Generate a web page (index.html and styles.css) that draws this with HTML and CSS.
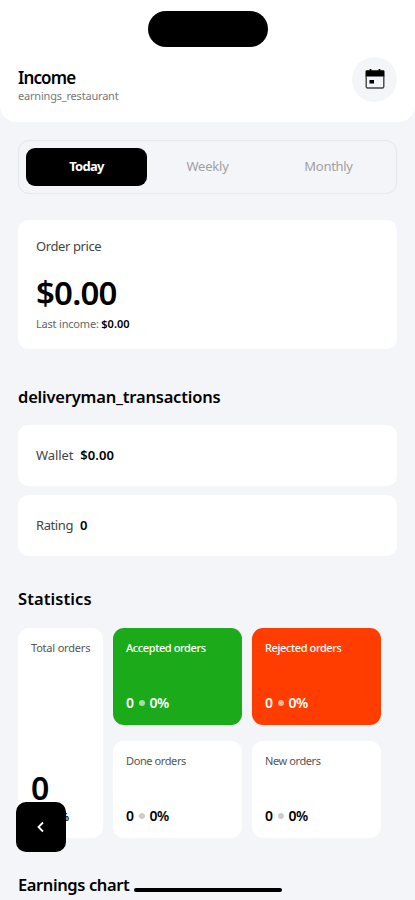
FILE: index.html
```html
<!DOCTYPE html>
<html lang="en">
<head>
<meta charset="utf-8">
<title>Income</title>
<link rel="stylesheet" href="styles.css">
</head>
<body>
<main class="screen">
  <header class="header">
    <div class="notch"></div>
    <div class="header-row">
      <div>
        <h1 class="title">Income</h1>
        <p class="subtitle">earnings_restaurant</p>
      </div>
      <button class="calendar" aria-label="Calendar">
        <svg width="20" height="20" viewBox="0 0 20 20"><path d="M0.500 7.500V2.500A1.200 1.200 0 0 1 1.700 1.300H18.300A1.200 1.200 0 0 1 19.500 2.500V7.500Z" fill="#000"/><path d="M5.500 0v2M14.500 0v2" stroke="#000" stroke-width="1.800"/><path d="M1.200 7V17.500Q1.200 19 2.700 19H17.300Q18.800 19 18.800 17.500V7" fill="none" stroke="#444" stroke-width="1.400"/><rect x="4.500" y="11" width="4.500" height="3.500" fill="#000"/></svg>
      </button>
    </div>
  </header>

  <nav class="tabs">
    <span class="tab active">Today</span>
    <span class="tab weekly">Weekly</span>
    <span class="tab monthly">Monthly</span>
  </nav>

  <section class="card price">
    <p class="label order">Order price</p>
    <p class="amount">$0.00</p>
    <p class="last">Last income: <b>$0.00</b></p>
  </section>

  <h2 class="heading transactions">deliveryman_transactions</h2>
  <section class="card row"><span class="label wallet">Wallet</span><b>$0.00</b></section>
  <section class="card row"><span class="label rating">Rating</span><b>0</b></section>

  <h2 class="heading statistics">Statistics</h2>
  <section class="stats">
    <div class="stat total">
      <p class="name total-name">Total orders</p>
      <p class="count">0</p>
      <p class="value"><span>0</span><i></i><span>0%</span></p>
    </div>
    <div class="stat green">
      <p class="name accepted">Accepted orders</p>
      <p class="value"><span>0</span><i></i><span>0%</span></p>
    </div>
    <div class="stat red">
      <p class="name rejected">Rejected orders</p>
      <p class="value"><span>0</span><i></i><span>0%</span></p>
    </div>
    <div class="stat">
      <p class="name done">Done orders</p>
      <p class="value"><span>0</span><i></i><span>0%</span></p>
    </div>
    <div class="stat">
      <p class="name new">New orders</p>
      <p class="value"><span>0</span><i></i><span>0%</span></p>
    </div>
  </section>

  <h2 class="heading chart">Earnings chart</h2>

  <button class="back" aria-label="Back">
    <svg width="10" height="12" viewBox="0 0 10 12"><path d="M7 1.500L2.500 6L7 10.500" fill="none" stroke="#fff" stroke-width="1.800"/></svg>
  </button>
  <div class="home-bar"></div>
</main>
</body>
</html>
```
FILE: styles.css
```css
* { box-sizing: border-box; margin: 0; padding: 0; }
body { background: #f4f5f9; font-family: "Noto Sans", sans-serif; color: #000; }
button { border: 0; display: flex; align-items: center; justify-content: center; }
.screen { position: relative; width: 415px; height: 900px; overflow: hidden; white-space: nowrap; }

.header { height: 122px; background: #fff; border-radius: 0 0 16px 16px; padding: 11px 18px 0; }
.notch { width: 120px; height: 36px; margin: 0 auto 10px 130px; border-radius: 18px; background: #000; }
.header-row { display: flex; justify-content: space-between; }
.title { margin-top: 11px; font-size: 17px; line-height: 20px; font-weight: 600; letter-spacing: -0.85px; }
.subtitle { font-size: 11px; line-height: 16px; color: #777; letter-spacing: -0.2px; }
.calendar { width: 45px; height: 45px; border-radius: 50%; background: #f4f5f8; }
.calendar svg { position: relative; top: -1px; }

.tabs { display: flex; height: 54px; margin: 18px 18px 0; padding: 7px; border: 1px solid #e6e7ea; border-radius: 11px; }
.tab { flex: 1; height: 38px; line-height: 37px; text-align: center; font-size: 13px; color: #a0a0a3; }
.active { background: #000; color: #fff; font-weight: 700; border-radius: 9px; letter-spacing: -0.7px; }
.weekly { letter-spacing: -0.2px; }
.monthly { letter-spacing: -0.3px; }

.card { margin: 0 18px; background: #fff; border-radius: 10px; padding: 0 18px; }
.price { height: 129px; margin-top: 26px; padding-top: 16px; }
.label { font-size: 13px; line-height: 20px; color: #444; letter-spacing: -0.4px; }
.amount { margin-top: 16px; font-size: 33px; line-height: 42px; font-weight: 600; letter-spacing: -0.8px; }
.last { margin-top: 2px; font-size: 11px; line-height: 16px; color: #666; letter-spacing: -0.2px; }
.last b { color: #000; font-weight: 600; letter-spacing: 0; }

.heading { margin-left: 18px; font-size: 16.5px; line-height: 24px; font-weight: 600; letter-spacing: -0.2px; }
.transactions { margin-top: 36px; margin-bottom: 16px; }
.row { display: flex; align-items: center; gap: 7px; height: 61px; margin-bottom: 9px; padding-bottom: 2px; }
.label.wallet { letter-spacing: -0.1px; }
.row b { font-size: 13px; font-weight: 600; letter-spacing: 0.1px; }
.statistics { margin-top: 31px; margin-bottom: 17px; letter-spacing: 0.1px; }

.stats { display: grid; grid-template: 97px 97px / 85px 129px 129px; gap: 16px 10px; margin-left: 18px; }
.stat { display: flex; flex-direction: column; padding: 12px 13px; background: #fff; border-radius: 11px; }
.total { grid-row: span 2; }
.name { font-size: 11px; line-height: 16px; color: #555; letter-spacing: -0.4px; }
.total-name { letter-spacing: -0.2px; }
.count { margin-top: auto; font-size: 32px; line-height: 43px; font-weight: 600; }
.value { display: flex; align-items: center; gap: 5px; margin-top: auto; font-size: 14px; line-height: 20px; font-weight: 600; letter-spacing: -0.5px; }
.total .value { margin-top: 0; margin-bottom: 2px; font-size: 11px; line-height: 15px; letter-spacing: -0.1px; }
.value i { width: 6px; height: 6px; border-radius: 50%; background: #ccc; }
.green { background: #1aaa1a; }
.red { background: #ff3d00; }
.green, .red, .green .name, .red .name { color: #fff; }
.green .name, .red .name { font-weight: 500; }
.green i { background: #a3dda3; }
.red i { background: #ffb199; }

.chart { margin-top: 35px; letter-spacing: -0.4px; }
.back { position: absolute; left: 16px; top: 802px; width: 50px; height: 50px; border-radius: 10px; background: #000; }
.home-bar { position: absolute; left: 134px; top: 888px; width: 148px; height: 4px; border-radius: 2px; background: #000; }
```
